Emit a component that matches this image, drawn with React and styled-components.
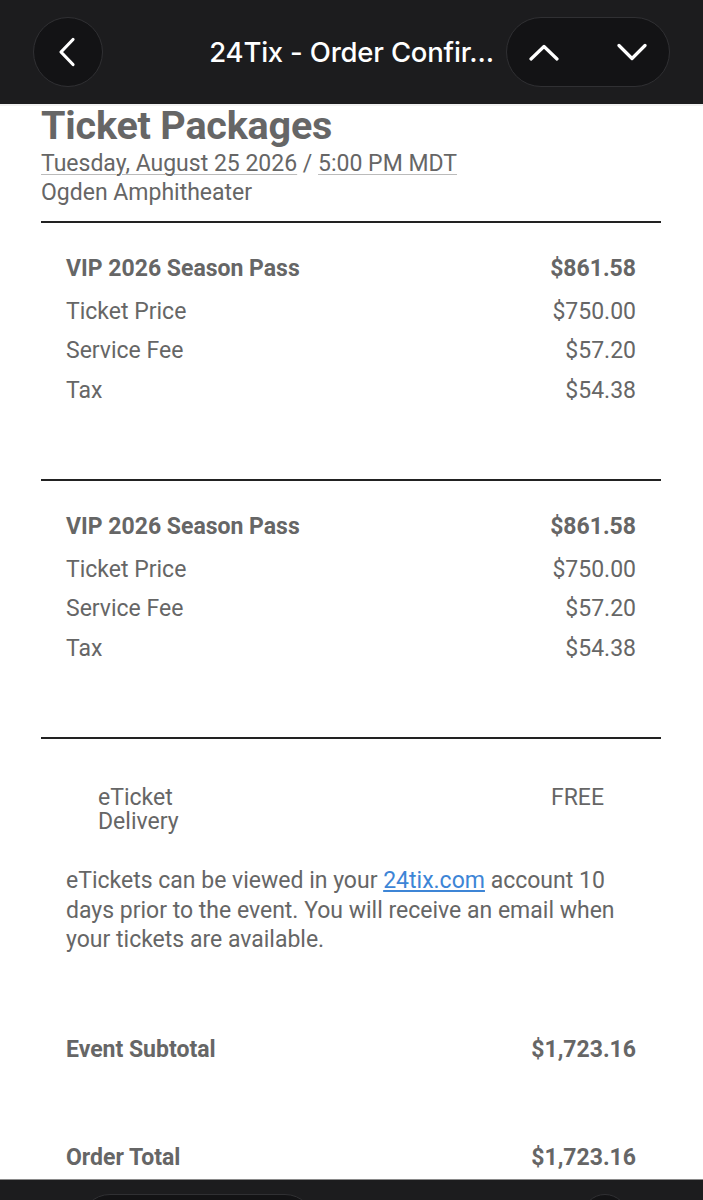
import React from "react";
import styled, { createGlobalStyle } from "styled-components";

const items = [
  { name: "VIP 2026 Season Pass", total: "$861.58" },
  { name: "VIP 2026 Season Pass", total: "$861.58" },
];

const fees = [
  ["Ticket Price", "$750.00"],
  ["Service Fee", "$57.20"],
  ["Tax", "$54.38"],
];

const App = () => {
  return (
    <>
      <GlobalStyle />
      <Screen>
        <TopBar>
          <RoundButton aria-label="Back">
            <svg width="18" height="30" viewBox="0 0 18 30" fill="none">
              <path d="M15 2.5 3 15l12 12.5" stroke="#fff" strokeWidth="3.2" strokeLinecap="round" strokeLinejoin="round" />
            </svg>
          </RoundButton>
          <PageTitle>24Tix - Order Confir...</PageTitle>
          <Pill>
            <svg width="30" height="17" viewBox="0 0 30 17" fill="none">
              <path d="M2 15 15 2.5 28 15" stroke="#fff" strokeWidth="3.2" strokeLinecap="round" strokeLinejoin="round" />
            </svg>
            <svg width="30" height="18" viewBox="0 0 30 18" fill="none">
              <path d="M2 2.5 15 15.5 28 2.5" stroke="#fff" strokeWidth="3.2" strokeLinecap="round" strokeLinejoin="round" />
            </svg>
          </Pill>
        </TopBar>

        <Content>
          <Heading>Ticket Packages</Heading>
          <EventLine>
            <Dotted>Tuesday, August 25 2026</Dotted> / <Dotted>5:00 PM MDT</Dotted>
          </EventLine>
          <EventLine>Ogden Amphitheater</EventLine>

          {items.map((item, i) => (
            <Package key={i}>
              <Row $bold $first>
                <span>{item.name}</span>
                <span>{item.total}</span>
              </Row>
              {fees.map(([label, value]) => (
                <Row key={label}>
                  <span>{label}</span>
                  <span>{value}</span>
                </Row>
              ))}
            </Package>
          ))}

          <Delivery>
            <DeliveryRow>
              <DeliveryLabel>eTicket Delivery</DeliveryLabel>
              <span>FREE</span>
            </DeliveryRow>
            <Note>
              eTickets can be viewed in your <Link href="#">24tix.com</Link> account 10 days prior to the event. You will
              receive an email when your tickets are available.
            </Note>
            <Total $gap="75px">
              <span>Event Subtotal</span>
              <span>$1,723.16</span>
            </Total>
            <Total $gap="68px">
              <span>Order Total</span>
              <span>$1,723.16</span>
            </Total>
          </Delivery>
        </Content>

        <BottomBar>
          <BottomPill />
          <BottomCircle />
        </BottomBar>
      </Screen>
    </>
  );
};

//Styled Components

const GlobalStyle = createGlobalStyle`
  html, body {
    margin: 0;
    padding: 0;
    background: #1c1c1e;
  }
  * { box-sizing: border-box; }
`;

const Screen = styled.div`
  width: 703px;
  height: 1200px;
  display: flex;
  flex-direction: column;
  overflow: hidden;
  background: #fff;
`;

const TopBar = styled.header`
  height: 104px;
  flex-shrink: 0;
  background: #1c1c1e;
  display: flex;
  align-items: center;
  padding: 0 33px 0 33px;
`;

const RoundButton = styled.div`
  width: 70px;
  height: 70px;
  border-radius: 50%;
  background: #131315;
  border: 1.5px solid #303033;
  display: flex;
  align-items: center;
  justify-content: center;
  padding-right: 3px;
`;

const PageTitle = styled.div`
  flex: 1;
  text-align: center;
  color: #fff;
  font-family: Inter, "Liberation Sans", sans-serif;
  font-weight: 500;
  font-size: 27.5px;
  letter-spacing: -0.2px;
  padding-left: 94px;
  white-space: nowrap;
  overflow: hidden;
`;

const Pill = styled.div`
  width: 164px;
  height: 70px;
  flex-shrink: 0;
  border-radius: 35px;
  background: #131315;
  border: 1.5px solid #303033;
  display: flex;
  align-items: center;
  justify-content: space-between;
  padding: 0 22px 0 22px;
`;

const Content = styled.main`
  flex: 1;
  padding: 0 42px 0 41px;
  font-family: Roboto, "Liberation Sans", sans-serif;
  color: #666;
  border-top: 2px solid #f1f1f1;
`;

const Heading = styled.h1`
  margin: -3px 0 0;
  font-size: 39.5px;
  font-weight: 700;
  line-height: 46px;
  letter-spacing: -0.2px;
`;

const EventLine = styled.div`
  font-size: 23px;
  line-height: 29px;
`;

const Dotted = styled.span`
  text-decoration: underline;
  text-decoration-color: #bbb;
  text-underline-offset: 3px;
  text-decoration-thickness: 1px;
`;

const Package = styled.section`
  border-top: 2px solid #222;
  padding: 26px 25px 69px;
  &:first-of-type {
    margin-top: 14px;
  }
`;

const Row = styled.div`
  display: flex;
  justify-content: space-between;
  font-size: 23px;
  line-height: 39.5px;
  font-weight: ${(p) => (p.$bold ? 700 : 400)};
  margin-bottom: ${(p) => (p.$first ? "3px" : "0")};
`;

const Delivery = styled.section`
  border-top: 2px solid #222;
  padding: 47px 25px 0;
`;

const DeliveryRow = styled.div`
  display: flex;
  justify-content: space-between;
  align-items: flex-start;
  padding: 0 32px;
  font-size: 23px;
  line-height: 24px;
`;

const DeliveryLabel = styled.span`
  width: 96px;
`;

const Note = styled.p`
  margin: 32px 0 0;
  font-size: 23px;
  line-height: 29.5px;
`;

const Link = styled.a`
  color: #3d85d6;
  text-decoration: underline;
`;

const Total = styled.div`
  display: flex;
  justify-content: space-between;
  font-size: 23px;
  font-weight: 700;
  line-height: 40px;
  margin-top: ${(p) => p.$gap};
`;

const BottomBar = styled.footer`
  height: 21px;
  flex-shrink: 0;
  background: #1c1c1e;
  border-top: 1px solid #8a8a8a;
  display: flex;
  justify-content: space-between;
  padding: 14px 75px 0 80px;
  overflow: hidden;
`;

const BottomPill = styled.div`
  width: 235px;
  height: 60px;
  border-radius: 30px;
  background: #131315;
  border: 1.5px solid #303033;
`;

const BottomCircle = styled.div`
  width: 46px;
  height: 46px;
  border-radius: 50%;
  background: #131315;
  border: 1.5px solid #303033;
`;

export default App;
